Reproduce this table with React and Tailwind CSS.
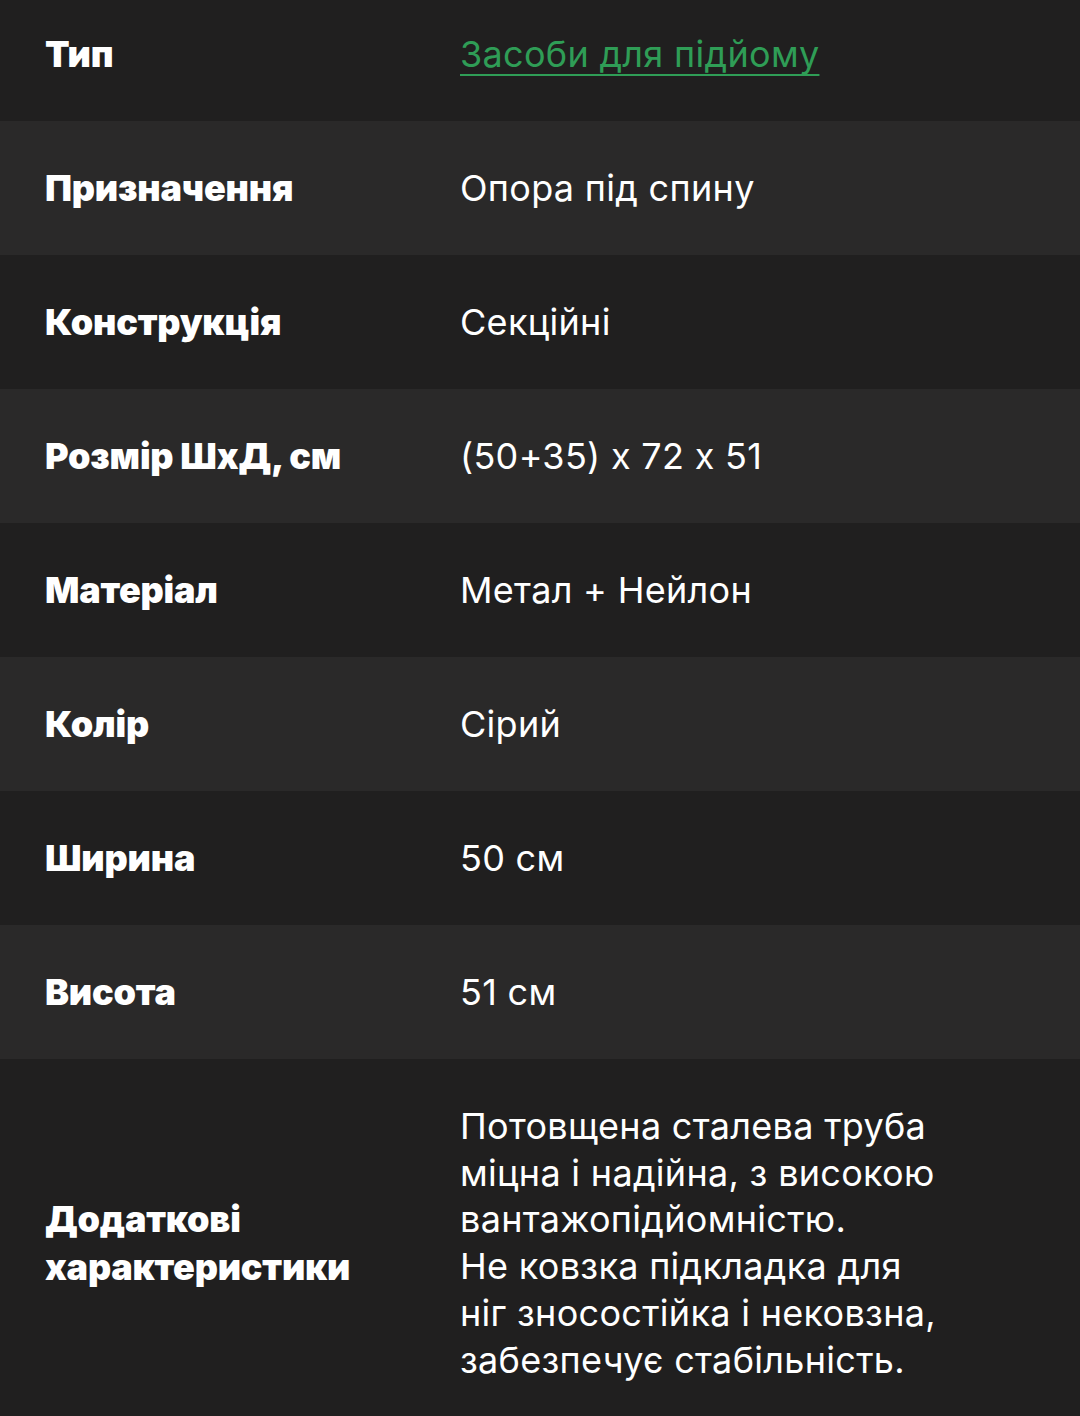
import React from 'react';

const rows = [
  { label: 'Призначення', value: 'Опора під спину' },
  { label: 'Конструкція', value: 'Секційні' },
  { label: 'Розмір ШхД, см', value: '(50+35) x 72 x 51' },
  { label: 'Матеріал', value: 'Метал + Нейлон' },
  { label: 'Колір', value: 'Сірий' },
  { label: 'Ширина', value: '50 см' },
  { label: 'Висота', value: '51 см' },
];

const font = { fontFamily: '"Inter", "Noto Sans", sans-serif' };

const App = () => {
  return (
    <div
      className="w-[1080px] min-h-[1416px] bg-[#201f1f] text-white [font-feature-settings:'calt'_0]"
      style={font}
    >
      {/* Тип — first row is cut off at the top */}
      <div className="flex h-[121px] items-center pb-[13px] bg-[#201f1f]">
        <div className="w-[460px] pl-[45px] text-[36px] font-black tracking-[-0.2px]">Тип</div>
        <a
          href="#"
          className="text-[36px] tracking-[0.3px] text-[#2f9d56] underline decoration-2 underline-offset-[7px]"
        >
          Засоби для підйому
        </a>
      </div>

      {rows.map((row, i) => (
        <div
          key={row.label}
          className={`flex h-[134px] items-center ${i % 2 === 0 ? 'bg-[#2a2929]' : 'bg-[#201f1f]'}`}
        >
          <div className="w-[460px] pl-[45px] text-[36px] font-black tracking-[-0.2px]">{row.label}</div>
          <div className="text-[36px] tracking-[0.3px]">{row.value}</div>
        </div>
      ))}

      <div className="flex items-center bg-[#201f1f] pt-[44px] pb-[30px]">
        <div className="w-[460px] pl-[45px] text-[36px] font-black leading-[48px] tracking-[-0.2px]">
          Додаткові
          <br />
          характеристики
        </div>
        <div className="text-[36px] leading-[46.7px] tracking-[0.3px]">
          Потовщена сталева труба
          <br />
          міцна і надійна, з високою
          <br />
          вантажопідйомністю.
          <br />
          Не ковзка підкладка для
          <br />
          ніг зносостійка і нековзна,
          <br />
          забезпечує стабільність.
        </div>
      </div>
    </div>
  );
};

export default App;
